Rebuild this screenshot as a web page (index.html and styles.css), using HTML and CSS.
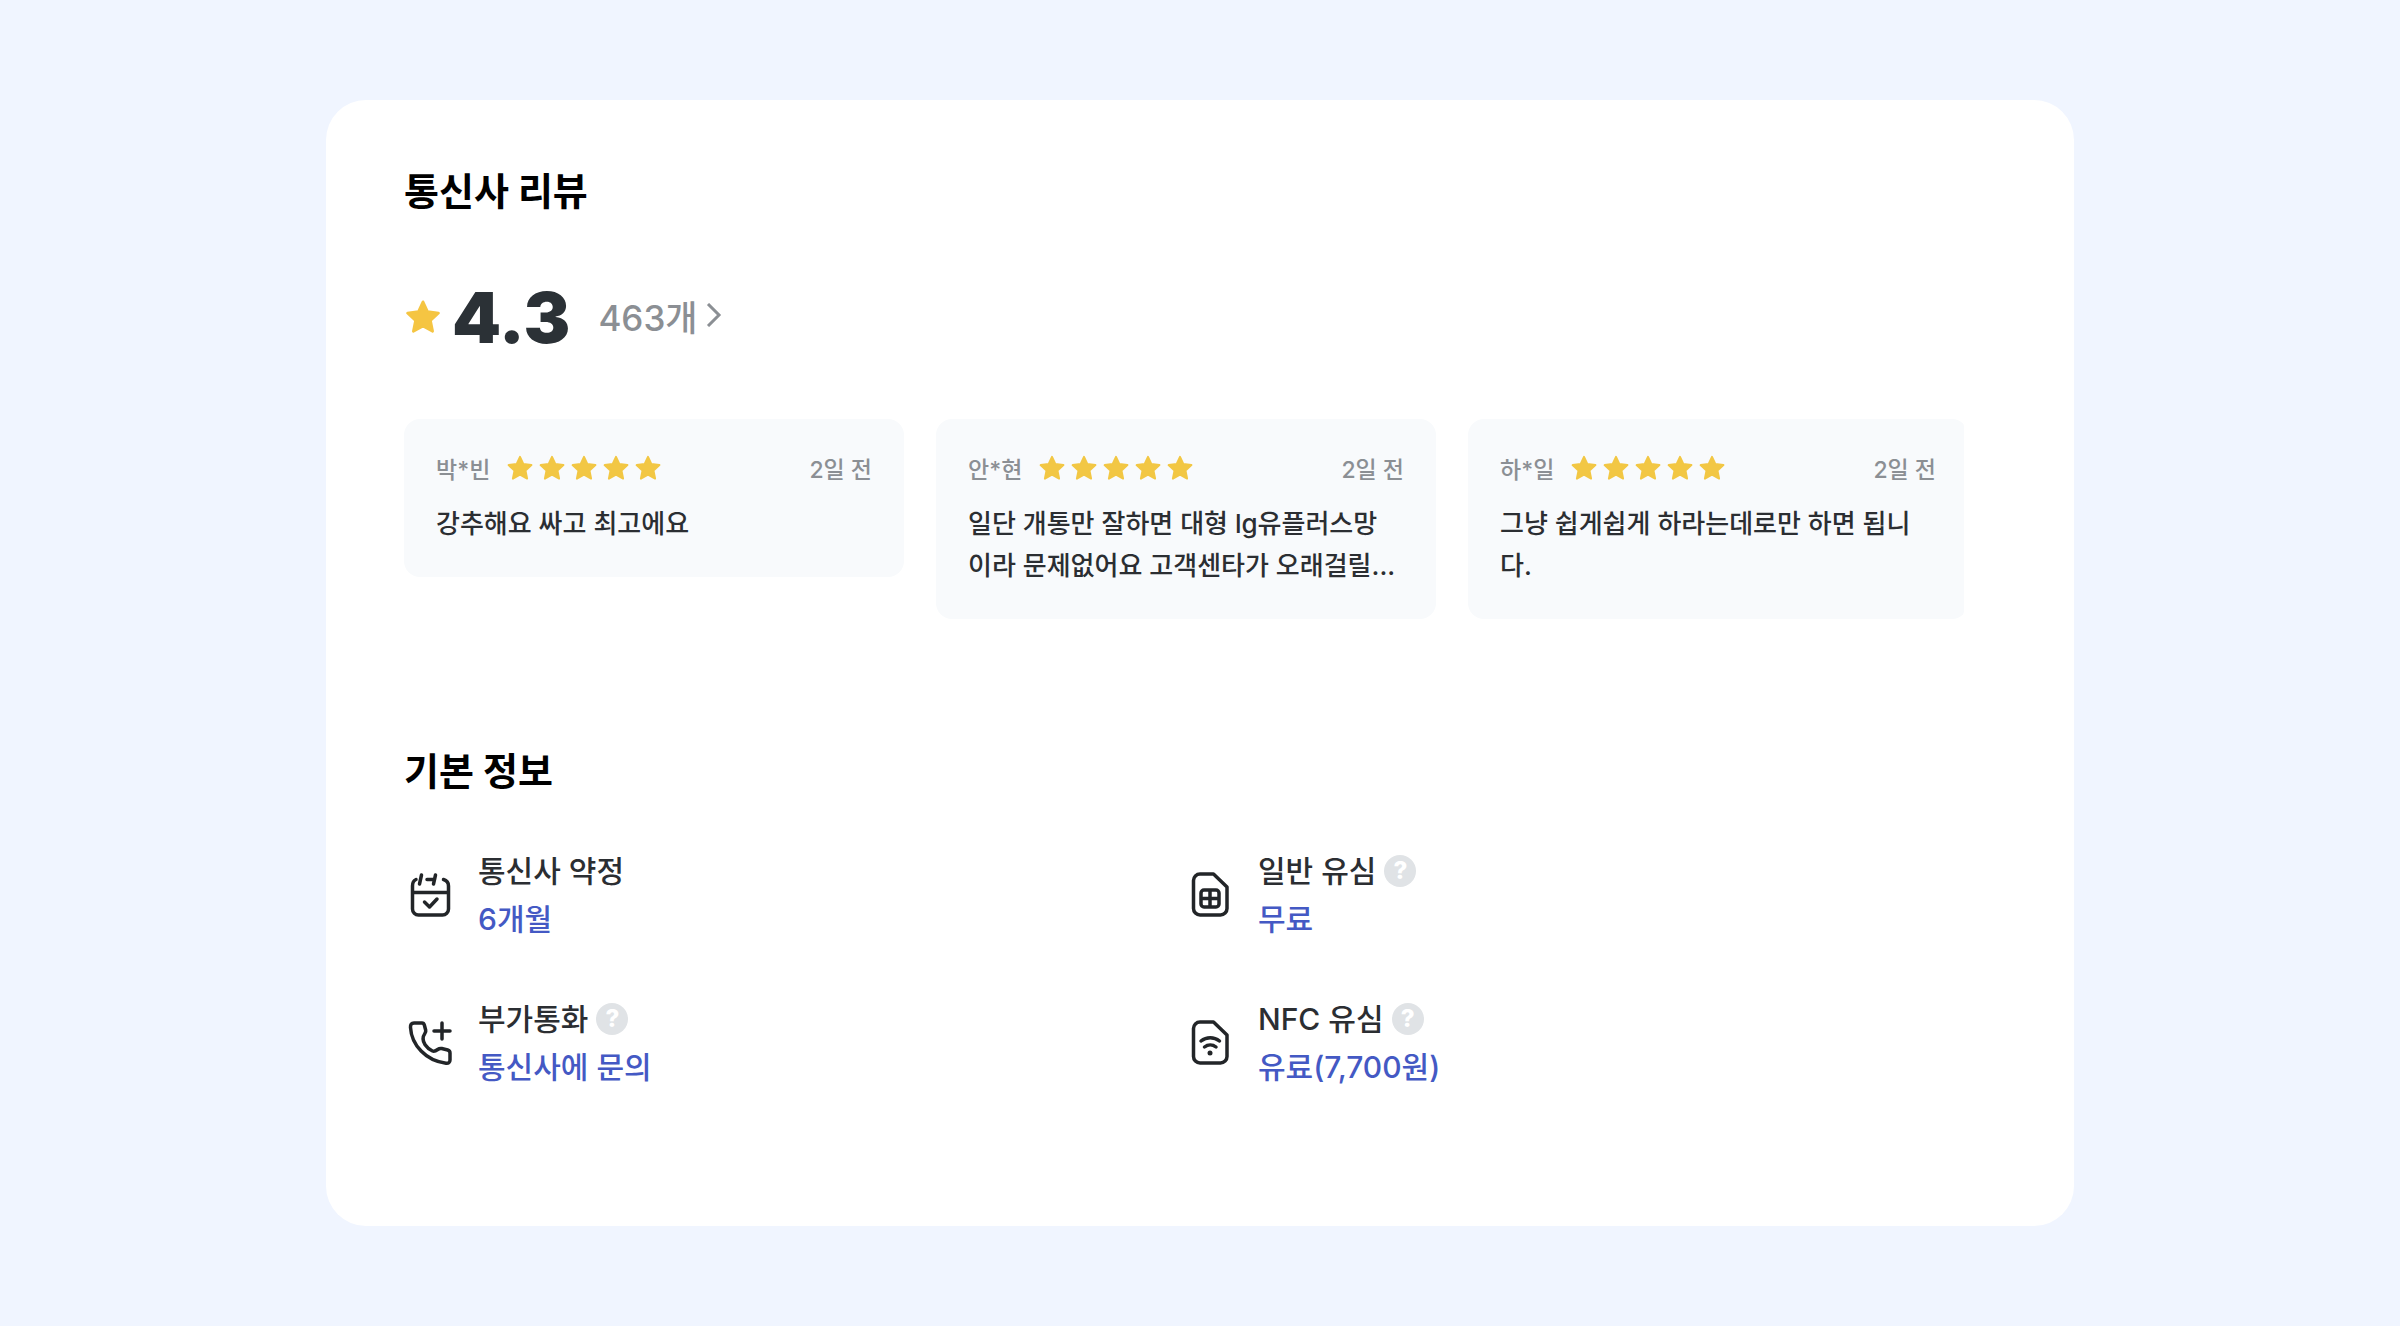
FILE: index.html
```
<!DOCTYPE html>
<html lang="ko">
<head>
	<meta charset="UTF-8">
	<title>통신사 리뷰</title>
	<link rel="stylesheet" href="styles.css">
</head>
<body>

	<svg class="sprite" aria-hidden="true">
		<symbol id="star" viewBox="0 0 28 28">
			<path d="M14 2.8l3.4 7.3 8 1-5.9 5.5 1.6 8-7.1-3.9-7.1 3.9 1.6-8-5.9-5.5 8-1z" fill="currentColor" stroke="currentColor" stroke-width="2" stroke-linejoin="round"/>
		</symbol>
	</svg>

	<main class="panel">
		<section class="review">
			<h2 class="title">통신사 리뷰</h2>

			<div class="score">
				<svg class="score-star"><use href="#star"/></svg>
				<strong class="score-num">4.3</strong>
				<a class="score-more" href="#reviews">463개
					<svg class="arrow" viewBox="0 0 16 24"><path d="M2 1l11 11L2 23"/></svg>
				</a>
			</div>

			<ul class="cards" id="reviews">
				<li class="card">
					<div class="card-head">
						<span>박*빈</span>
						<span class="stars" role="img" aria-label="5점">
							<svg><use href="#star"/></svg>
							<svg><use href="#star"/></svg>
							<svg><use href="#star"/></svg>
							<svg><use href="#star"/></svg>
							<svg><use href="#star"/></svg>
						</span>
						<time class="date">2일 전</time>
					</div>
					<p class="card-text">강추해요 싸고 최고에요</p>
				</li>
				<li class="card">
					<div class="card-head">
						<span>안*현</span>
						<span class="stars" role="img" aria-label="5점">
							<svg><use href="#star"/></svg>
							<svg><use href="#star"/></svg>
							<svg><use href="#star"/></svg>
							<svg><use href="#star"/></svg>
							<svg><use href="#star"/></svg>
						</span>
						<time class="date">2일 전</time>
					</div>
					<p class="card-text">일단 개통만 잘하면 대형 lg유플러스망<br>이라 문제없어요 고객센타가 오래걸릴...</p>
				</li>
				<li class="card">
					<div class="card-head">
						<span>하*일</span>
						<span class="stars" role="img" aria-label="5점">
							<svg><use href="#star"/></svg>
							<svg><use href="#star"/></svg>
							<svg><use href="#star"/></svg>
							<svg><use href="#star"/></svg>
							<svg><use href="#star"/></svg>
						</span>
						<time class="date">2일 전</time>
					</div>
					<p class="card-text">그냥 쉽게쉽게 하라는데로만 하면 됩니<br>다.</p>
				</li>
			</ul>
		</section>

		<section class="basic">
			<h2 class="title">기본 정보</h2>

			<dl class="infos">
				<div class="info">
					<!-- calendar -->
					<svg class="info-icon" viewBox="0 0 52 52">
						<path d="M12 10.5C9.500 11.500 8.500 13.500 8.500 17v23a6 6 0 0 0 6 6h24a6 6 0 0 0 6-6V17c0-3.500-1.500-5.500-5-6.500M8.500 23.500h36M23 10.500h6"/>
						<path d="M17.500 6l-2 9M31.500 6l-2 9"/>
						<path d="M20.500 33l5 5 7.500-8"/>
					</svg>
					<div>
						<dt>통신사 약정</dt>
						<dd>6개월</dd>
					</div>
				</div>
				<div class="info">
					<!-- usim -->
					<svg class="info-icon" viewBox="0 0 52 52">
						<path d="M16 5h13.500l13.500 13v21.500a6.500 6.500 0 0 1-6.500 6.500H16a6.500 6.500 0 0 1-6.500-6.500v-28A6.500 6.500 0 0 1 16 5z"/>
						<path d="M20 21h12a3 3 0 0 1 3 3v11a3 3 0 0 1-3 3H20a3 3 0 0 1-3-3V24a3 3 0 0 1 3-3zM26 21v17M17 29.500h18"/>
					</svg>
					<div>
						<dt>일반 유심 <button class="help" type="button">?</button></dt>
						<dd>무료</dd>
					</div>
				</div>
				<div class="info">
					<!-- phone -->
					<svg class="info-icon" viewBox="0 0 52 52">
						<path d="M10 6h8c1.500 0 2 .8 2.400 2.200l1.300 5c.3 1.300 0 2-.8 3.200-2.600 3.800-2.300 7.600.2 11.300 2 2.900 4.400 5 7.400 6.300 2 .8 3.500-.2 5.200-1.500 1.300-1 2.500-1.300 4-1l6 1.500c1.700.5 2.300 1.300 2.300 3v7c0 2.500-1.500 3.500-4 3.200C22 44 7.500 28 6.500 10.500 6.300 7.500 7.500 6 10 6z"/>
						<path d="M38 6v16M30 14h16"/>
					</svg>
					<div>
						<dt>부가통화 <button class="help" type="button">?</button></dt>
						<dd>통신사에 문의</dd>
					</div>
				</div>
				<div class="info">
					<!-- nfc usim -->
					<svg class="info-icon" viewBox="0 0 52 52">
						<path d="M16 5h13.500l13.500 13v21.500a6.500 6.500 0 0 1-6.500 6.500H16a6.500 6.500 0 0 1-6.500-6.500v-28A6.500 6.500 0 0 1 16 5z"/>
						<path d="M17 24c5.500-4.500 13-4.500 18.500 0M20.500 30c3.500-2.800 8-2.800 11.500 0"/>
						<circle cx="26" cy="36" r="2.500" class="dot"/>
					</svg>
					<div>
						<dt>NFC 유심 <button class="help" type="button">?</button></dt>
						<dd>유료(7,700원)</dd>
					</div>
				</div>
			</dl>
		</section>
	</main>

</body>
</html>
```
FILE: styles.css
```
* { box-sizing: border-box }
body {
	margin: 0;
	padding: 100px 326px;
	background-color: #f0f5ff;
	color: #2b2e32;
	font-family: Inter, "Noto Sans CJK KR", sans-serif;
}
h2, ul, dl, dd, p { margin: 0; padding: 0 }
ul { list-style: none }
svg { display: block; flex: none }
.sprite { display: none }

.panel {
	padding: 63px 110px 135px 78px;
	border-radius: 40px;
	background-color: #fff;
}
.title {
	color: #000;
	font-size: 38px;
	line-height: 56px;
	font-weight: 700;
}

.score {
	display: flex;
	align-items: center;
	height: 88px;
	margin-top: 54px;
}
.score-star { width: 38px; height: 38px; color: #f5c542 }
.score-num {
	margin-left: 10px;
	color: #2b3136;
	font-size: 70px;
	font-weight: 900;
}
.score-more {
	display: flex;
	align-items: center;
	gap: 8px;
	margin-left: 28px;
	padding-bottom: 4px;
	color: #8b8f94;
	font-size: 35px;
	font-weight: 500;
	text-decoration: none;
}
.arrow {
	width: 16px;
	height: 24px;
	fill: none;
	stroke: currentColor;
	stroke-width: 3;
}

/* the row is cut off on the right when cards do not fit */
.cards {
	display: grid;
	grid-template-columns: repeat(3, minmax(500px, 1fr));
	align-items: start;
	gap: 32px;
	margin-top: 58px;
	border-radius: 8px;
	overflow: hidden;
}
.card {
	padding: 32px;
	border-radius: 16px;
	background-color: #f8fafc;
}
.card-head {
	display: flex;
	align-items: center;
	height: 34px;
	color: #8b8f94;
	font-size: 23px;
	font-weight: 500;
}
.stars {
	display: flex;
	gap: 4px;
	margin-left: 16px;
	color: #f2c744;
}
.stars svg { width: 28px; height: 28px }
.date { margin-left: auto }
.card-text {
	margin-top: 18px;
	font-size: 26px;
	line-height: 42px;
	font-weight: 500;
}

.basic { margin-top: 124px }
.infos {
	display: grid;
	grid-template-columns: 1fr 1fr;
	row-gap: 52px;
	margin-top: 48px;
}
.info {
	display: flex;
	align-items: center;
	gap: 22px;
	font-size: 30px;
	line-height: 48px;
	font-weight: 500;
}
.info-icon {
	width: 52px;
	height: 52px;
	fill: none;
	stroke: #222528;
	stroke-width: 3.5;
	stroke-linecap: round;
	stroke-linejoin: round;
}
.dot { fill: #222528; stroke: none }
dt {
	display: flex;
	align-items: center;
	gap: 8px;
}
dd { color: #4459c4 }
.help {
	width: 32px;
	height: 32px;
	padding: 0;
	border: 0;
	border-radius: 50%;
	background-color: #e0e3e6;
	color: #fff;
	font: 800 24px/32px Inter, sans-serif;
	cursor: pointer;
}
```
